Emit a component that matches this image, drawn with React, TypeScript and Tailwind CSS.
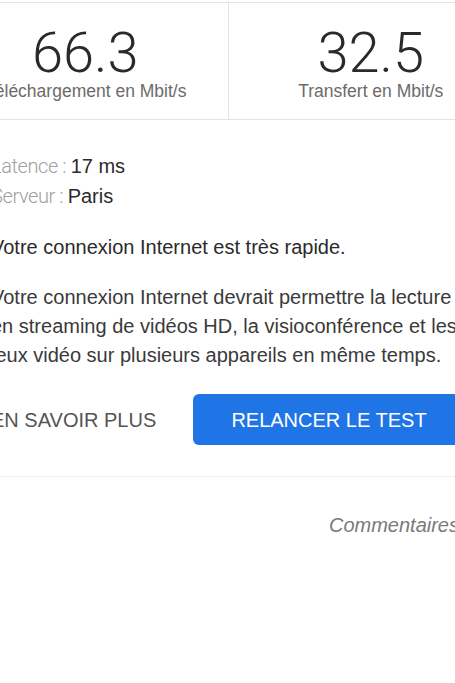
export default function App() {
  return (
    <div className="min-h-screen w-full overflow-hidden bg-white">
      <div className="ml-[-57px] w-[570px] pt-[2px] font-['Liberation_Sans',Arial,sans-serif]">
        <Stats />
        <Details />
        <div className="mt-[31px] border-t border-[#ececec]" />
        <div className="flex justify-end pr-[54px] pt-[33px] text-[20px] italic text-[#7a7a7a]">
          Commentaires
        </div>
      </div>
    </div>
  )
}

function Stats() {
  return (
    <div className="flex h-[118px] border-y border-[#e4e4e4]">
      <Stat value="66.3" label="Téléchargement en Mbit/s" />
      <div className="w-px bg-[#e4e4e4]" />
      <Stat value="32.5" label="Transfert en Mbit/s" />
    </div>
  )
}

function Stat({ value, label }: { value: string; label: string }) {
  return (
    <div className="flex flex-1 flex-col items-center pt-[25px]">
      <div className="font-['Roboto',sans-serif] text-[56px] font-light leading-[50px] text-[#2a2a2a]">
        {value}
      </div>
      <div className="text-[17.5px] text-[#6b6b6b]">{label}</div>
    </div>
  )
}

function Details() {
  return (
    <div className="px-[48px] pt-[31px] text-[20px] text-[#2b2b2b]">
      <div className="leading-[30px]">
        <div>
          <span className="font-['Roboto',sans-serif] font-light tracking-[-0.4px] text-[#a0a0a0]">Latence : </span>17 ms
        </div>
        <div>
          <span className="font-['Roboto',sans-serif] font-light tracking-[-0.4px] text-[#a0a0a0]">Serveur : </span>Paris
        </div>
      </div>
      <p className="mt-[21px] leading-[30px]">Votre connexion Internet est très rapide.</p>
      <p className="mt-[21px] leading-[29px] text-[#3a3a3a]">
        Votre connexion Internet devrait permettre la lecture en streaming de vidéos HD, la visioconférence et les jeux vidéo sur plusieurs appareils en même temps.
      </p>
      <div className="mt-[24px] flex items-center justify-between">
        <button className="pl-0 text-[20px] text-[#555]">EN SAVOIR PLUS</button>
        <button className="flex h-[51px] w-[272px] items-center justify-center rounded-[6px] bg-[#1f75e6] text-[20px] text-white">
          RELANCER LE TEST
        </button>
      </div>
    </div>
  )
}
